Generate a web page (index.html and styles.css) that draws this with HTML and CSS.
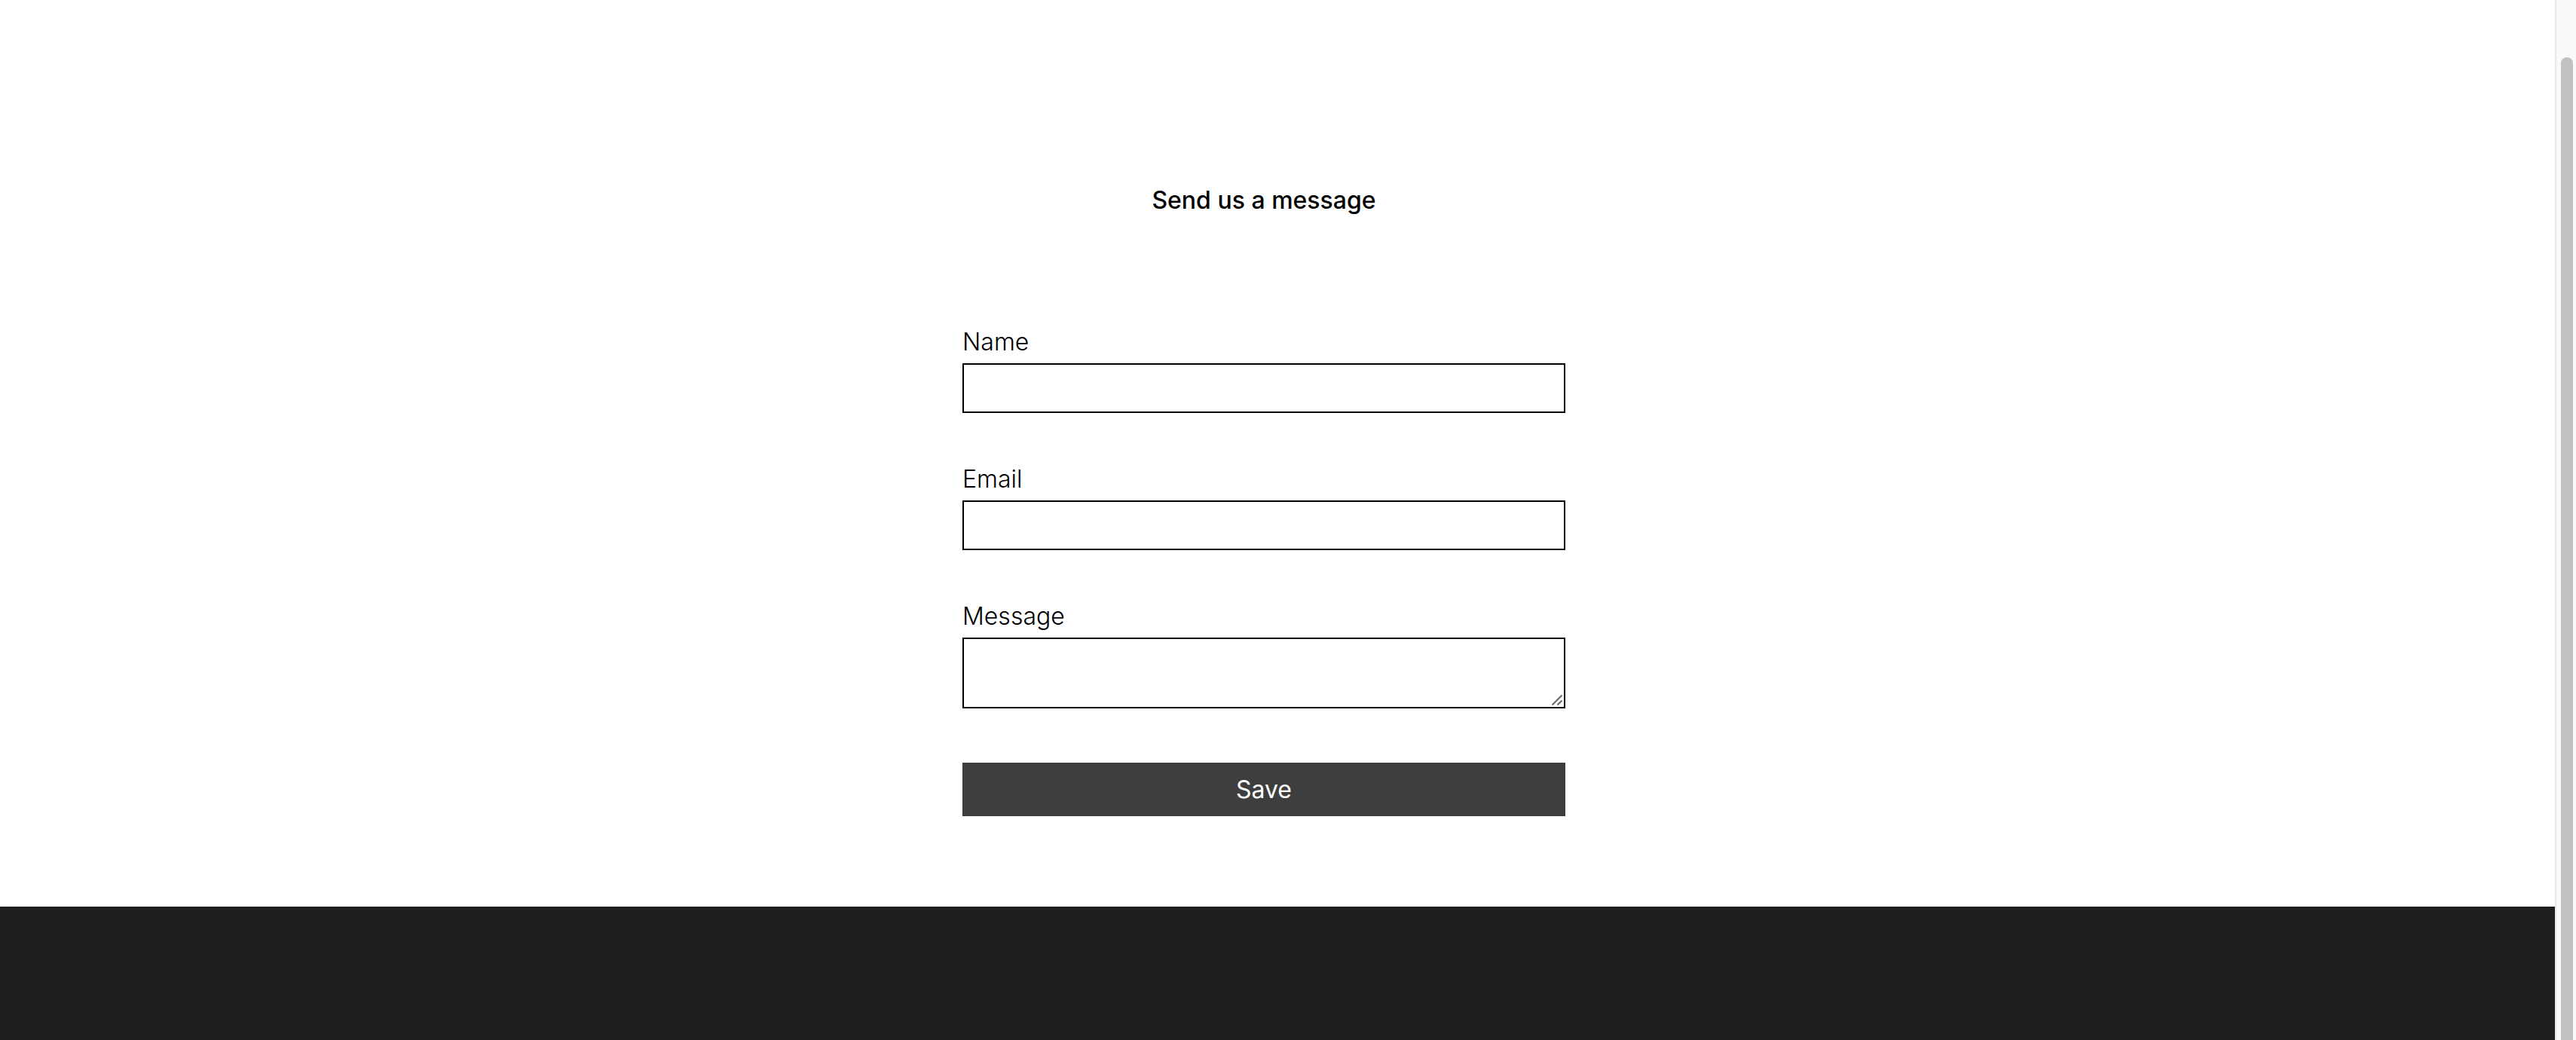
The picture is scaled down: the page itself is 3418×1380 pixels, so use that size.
FILE: index.html
```html
<!DOCTYPE html>
<html lang="en">
<head>
  <meta charset="utf-8">
  <meta name="viewport" content="width=device-width, initial-scale=1">
  <title>Send us a message</title>
  <link rel="stylesheet" href="styles.css">
</head>
<body>
  <div class="page">
    <main class="contact">
      <h1 class="contact-title">Send us a message</h1>
      <form class="form">
        <div class="field">
          <label class="label" for="name">Name</label>
          <input class="control" id="name" name="name" type="text">
        </div>
        <div class="field">
          <label class="label" for="email">Email</label>
          <input class="control" id="email" name="email" type="email">
        </div>
        <div class="field">
          <label class="label" for="message">Message</label>
          <div class="message-box">
            <textarea class="control control-message" id="message" name="message"></textarea>
            <svg class="grip" viewBox="0 0 14 14" aria-hidden="true">
              <path d="M0.5 13.5 13.5 0.5M7.5 13.5 13.5 7.5"/>
            </svg>
          </div>
        </div>
        <button class="save" type="submit">Save</button>
      </form>
    </main>
    <footer class="footer"></footer>
  </div>
  <div class="scroll-track" aria-hidden="true">
    <div class="scroll-thumb"></div>
  </div>
</body>
</html>
```
FILE: styles.css
```css
* {
  box-sizing: border-box;
}

body {
  display: flex;
  height: 100vh;
  margin: 0;
  overflow: hidden;
  background: #fff;
  color: #000;
  font: 300 32px/40px Inter, "Liberation Sans", sans-serif;
}

.page {
  display: flex;
  flex: 1;
  flex-direction: column;
  min-width: 0;
}

.contact {
  display: flex;
  flex-direction: column;
  align-items: center;
  padding: 246px 36px 120px 0;
}

.contact-title {
  margin: 0 0 148px;
  font-size: 32px;
  font-weight: 500;
}

.form {
  width: 100%;
  max-width: 800px;
}

.field {
  display: flex;
  flex-direction: column;
  gap: 8px;
  margin-bottom: 68px;
}

.field:last-of-type {
  margin-bottom: 72px;
}

.control {
  display: block;
  width: 100%;
  height: 66px;
  margin: 0;
  padding: 4px 12px;
  border: 2px solid #000;
  border-radius: 0;
  outline: 0;
  background: #fff;
  font: inherit;
}

.control-message {
  height: 94px;
  resize: none;
}

.message-box {
  position: relative;
}

.grip {
  position: absolute;
  right: 4px;
  bottom: 4px;
  width: 14px;
  height: 14px;
  fill: none;
  stroke: #666;
  stroke-width: 2;
}

.save {
  display: block;
  width: 100%;
  height: 71px;
  padding: 0;
  border: 0;
  background: #3e3e3e;
  color: #fff;
  font: inherit;
  font-weight: 400;
}

.footer {
  flex: 1;
  background: #1e1e1e;
}

.scroll-track {
  flex: none;
  width: 28px;
  padding: 76px 4px 0 6px;
  border-left: 2px solid #e8e8e8;
  background: #fafafa;
}

.scroll-thumb {
  width: 16px;
  height: 100%;
  border-radius: 8px 8px 0 0;
  background: #c1c1c1;
}
```
